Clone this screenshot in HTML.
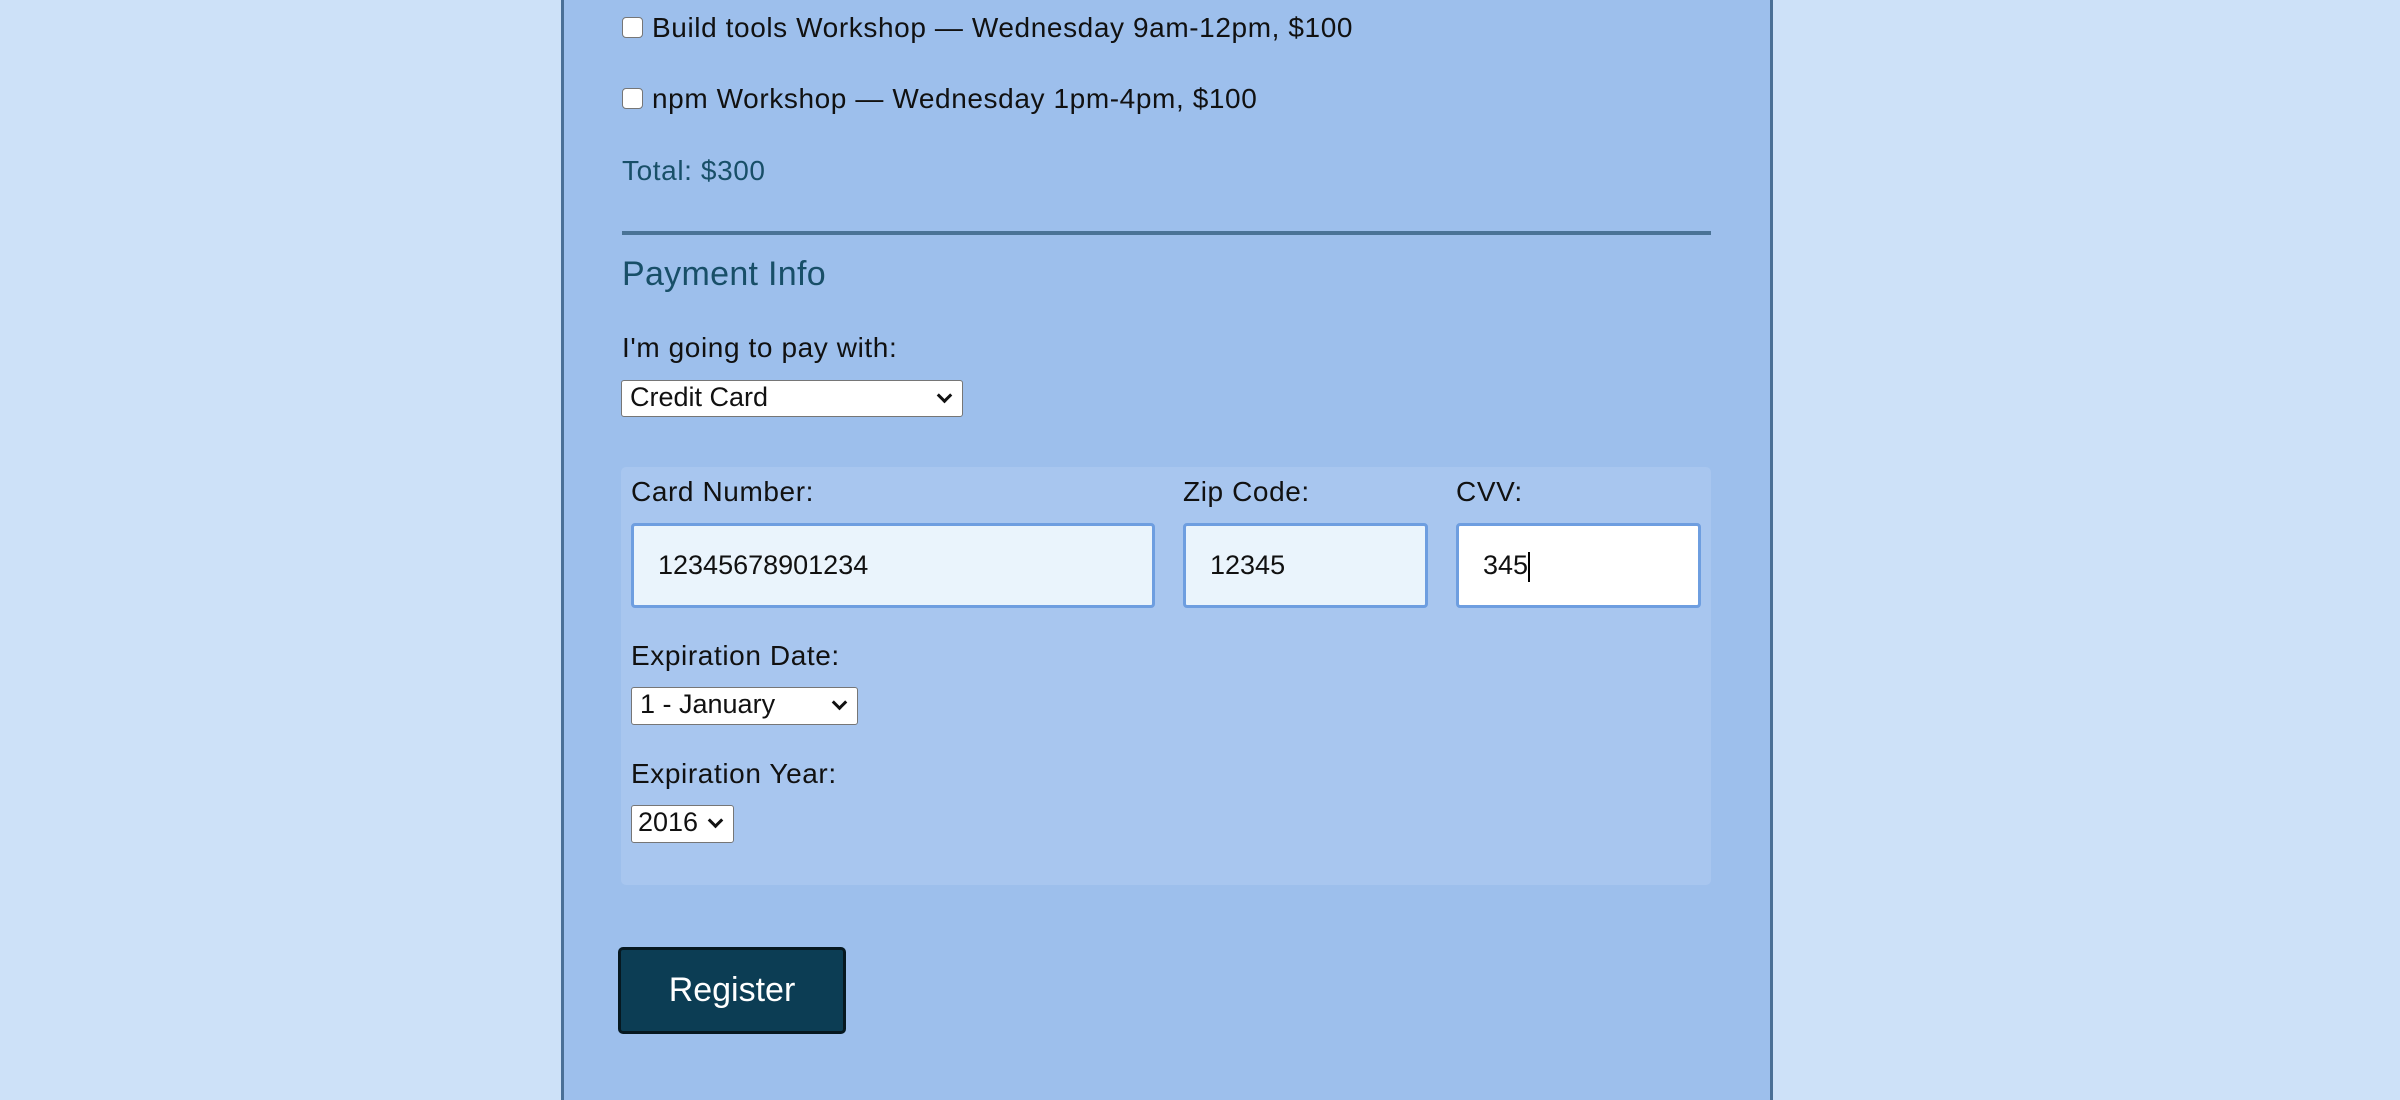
<!DOCTYPE html>
<html style="width:2400px;height:1100px;overflow:hidden"><head><meta charset="utf-8"><style>
*{margin:0;padding:0;box-sizing:border-box}
body{width:2400px;height:1100px;background:#cde1f8;position:relative;overflow:hidden;font-family:"Liberation Sans",sans-serif;color:#111}
.panel{position:absolute;left:561px;top:0;width:1212px;height:1100px;background:#9dbfec;border-left:3px solid #4a6f96;border-right:3px solid #4a6f96}
.a{position:absolute;white-space:nowrap}
.t{font-size:28px;line-height:32px;letter-spacing:0.6px}
.cb{position:absolute;width:21px;height:21px;background:#fff;border:1.5px solid #767676;border-radius:4px}
.sel{position:absolute;background:#fff;border:1.5px solid #767676;border-radius:3px;font-size:27px;line-height:33px;padding-left:8px}
.sel:after{content:"";position:absolute;right:12px;top:9px;width:8px;height:8px;border-right:3px solid #111;border-bottom:3px solid #111;transform:rotate(45deg)}
.inp{position:absolute;height:85px;border:3px solid #6e9ee0;border-radius:4px;background:#eaf4fc;font-size:27px;line-height:79px;padding-left:24px}
</style></head><body>
<div class="panel"></div>
<div class="cb" style="left:622px;top:17px"></div>
<div class="a t" style="left:652px;top:12px">Build tools Workshop — Wednesday 9am-12pm, $100</div>
<div class="cb" style="left:622px;top:88px"></div>
<div class="a t" style="left:652px;top:83px">npm Workshop — Wednesday 1pm-4pm, $100</div>
<div class="a t" style="left:622px;top:155px;color:#184f68">Total: $300</div>
<div class="a" style="left:622px;top:231px;width:1089px;height:4px;background:#4a7396"></div>
<div class="a" style="left:622px;top:254px;font-size:34px;line-height:40px;color:#184f68;letter-spacing:0.3px">Payment Info</div>
<div class="a t" style="left:622px;top:332px">I'm going to pay with:</div>
<div class="sel" style="left:621px;top:380px;width:342px;height:37px">Credit Card</div>
<div class="a" style="left:621px;top:467px;width:1090px;height:418px;background:#a8c6ef;border-radius:5px"></div>
<div class="a t" style="left:631px;top:476px">Card Number:</div>
<div class="a t" style="left:1183px;top:476px">Zip Code:</div>
<div class="a t" style="left:1456px;top:476px">CVV:</div>
<div class="inp" style="left:631px;top:523px;width:524px">12345678901234</div>
<div class="inp" style="left:1183px;top:523px;width:245px">12345</div>
<div class="inp" style="left:1456px;top:523px;width:245px;background:#fff">345<span style="display:inline-block;width:2px;height:30px;background:#000;vertical-align:middle"></span></div>
<div class="a t" style="left:631px;top:640px">Expiration Date:</div>
<div class="sel" style="left:631px;top:687px;width:227px;height:38px">1 - January</div>
<div class="a t" style="left:631px;top:758px">Expiration Year:</div>
<div class="sel" style="left:631px;top:805px;width:103px;height:38px;padding-left:6px">2016</div>
<div class="a" style="left:618px;top:947px;width:228px;height:87px;background:#0c3d54;border:3px solid #061820;border-radius:5px;color:#fff;font-size:34px;line-height:81px;text-align:center">Register</div>
</body></html>
